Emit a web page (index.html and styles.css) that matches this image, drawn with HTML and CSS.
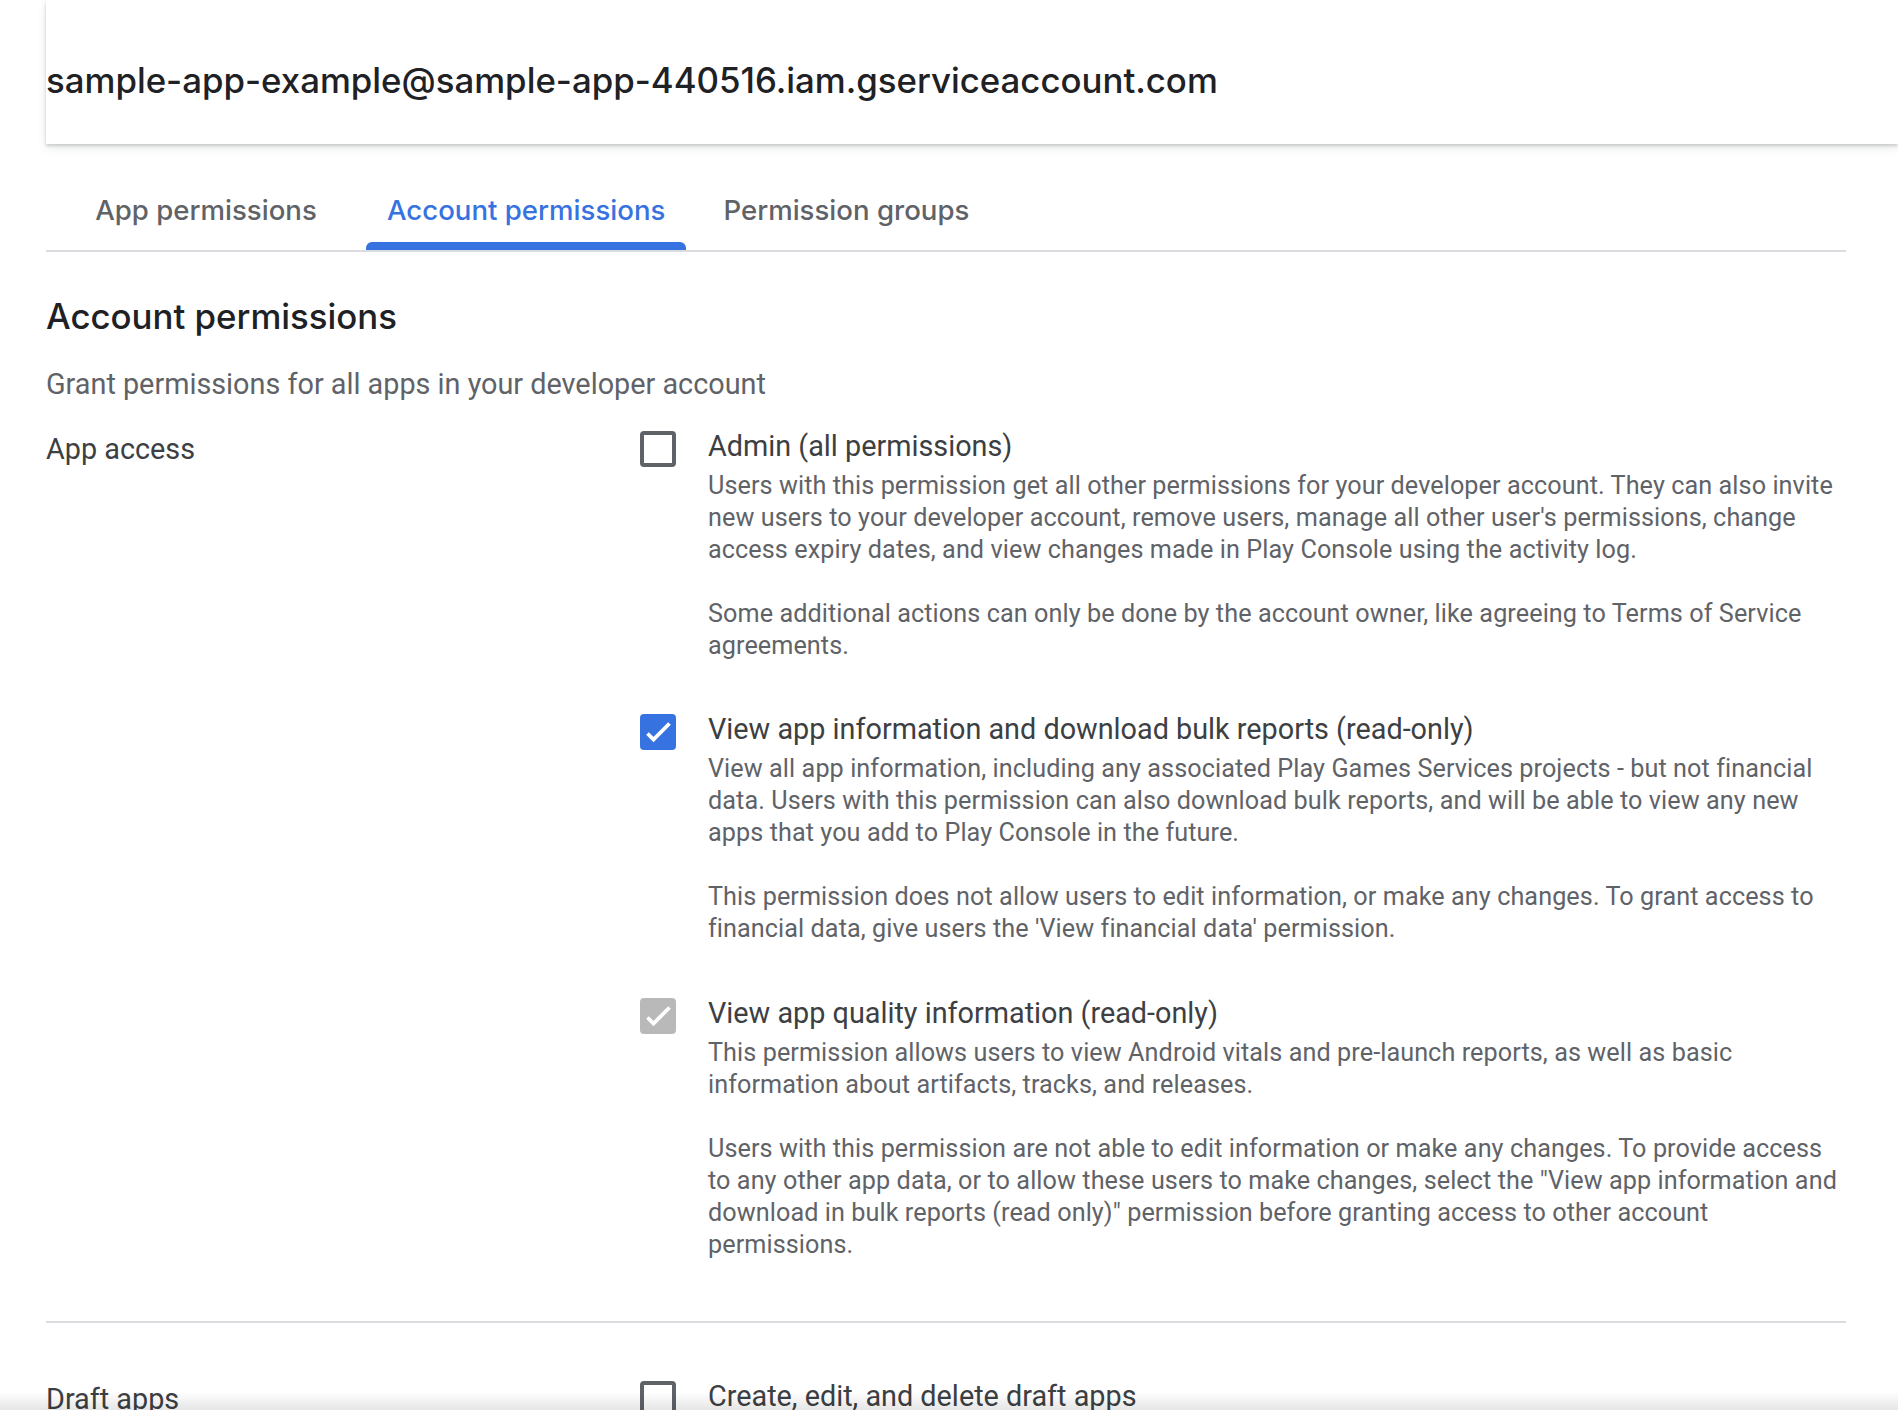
FILE: index.html
```html
<!DOCTYPE html>
<html lang="en">
<head>
<meta charset="utf-8">
<title>Account permissions</title>
<link rel="stylesheet" href="styles.css">
</head>
<body>
<header class="topbar">
  <h1 class="account-email">sample-app-example@sample-app-440516.iam.gserviceaccount.com</h1>
</header>

<main class="content">
  <nav class="tabs">
    <div class="tab">App permissions</div>
    <div class="tab tab-active">Account permissions</div>
    <div class="tab">Permission groups</div>
  </nav>

  <h2 class="section-title">Account permissions</h2>
  <p class="section-sub">Grant permissions for all apps in your developer account</p>

  <section class="perm-group">
    <div class="group-label">App access</div>
    <div class="options">
      <div class="option">
        <span class="checkbox"></span>
        <div class="option-body">
          <div class="option-label">Admin (all permissions)</div>
          <div class="option-desc">
            <p>Users with this permission get all other permissions for your developer account. They can also invite new users to your developer account, remove users, manage all other user's permissions, change access expiry dates, and view changes made in Play Console using the activity log.</p>
            <p>Some additional actions can only be done by the account owner, like agreeing to Terms of Service agreements.</p>
          </div>
        </div>
      </div>

      <div class="option">
        <span class="checkbox checkbox-checked">
          <svg viewBox="0 0 36 36" class="check-icon"><polyline points="7.5,19.5 13.5,25.5 29.5,9.5"/></svg>
        </span>
        <div class="option-body">
          <div class="option-label">View app information and download bulk reports (read-only)</div>
          <div class="option-desc">
            <p>View all app information, including any associated Play Games Services projects - but not financial data. Users with this permission can also download bulk reports, and will be able to view any new apps that you add to Play Console in the future.</p>
            <p>This permission does not allow users to edit information, or make any changes. To grant access to financial data, give users the 'View financial data' permission.</p>
          </div>
        </div>
      </div>

      <div class="option">
        <span class="checkbox checkbox-disabled">
          <svg viewBox="0 0 36 36" class="check-icon"><polyline points="7.5,19.5 13.5,25.5 29.5,9.5"/></svg>
        </span>
        <div class="option-body">
          <div class="option-label">View app quality information (read-only)</div>
          <div class="option-desc">
            <p>This permission allows users to view Android vitals and pre-launch reports, as well as basic information about artifacts, tracks, and releases.</p>
            <p>Users with this permission are not able to edit information or make any changes. To provide access to any other app data, or to allow these users to make changes, select the "View app information and download in bulk reports (read only)" permission before granting access to other account permissions.</p>
          </div>
        </div>
      </div>
    </div>
  </section>

  <hr class="divider">

  <section class="perm-group perm-group-next">
    <div class="group-label">Draft apps</div>
    <div class="options">
      <div class="option">
        <span class="checkbox"></span>
        <div class="option-body">
          <div class="option-label">Create, edit, and delete draft apps</div>
        </div>
      </div>
    </div>
  </section>
</main>

<div class="bottom-shade"></div>
</body>
</html>
```

FILE: styles.css
```css
* { box-sizing: border-box; }

html, body {
  margin: 0;
  padding: 0;
  background: #ffffff;
}

body {
  font-family: Roboto, "Liberation Sans", sans-serif;
  color: #3c4043;
}

.topbar {
  margin-left: 46px;
  height: 144px;
  padding-top: 16px;
  display: flex;
  align-items: center;
  background: #ffffff;
  box-shadow: 0 2px 3px rgba(60, 64, 67, 0.22), 0 4px 10px rgba(60, 64, 67, 0.10);
  position: relative;
  z-index: 1;
}

.account-email {
  margin: 0;
  font-family: Inter, "Open Sans", sans-serif;
  font-weight: 500;
  font-size: 34.8px;
  line-height: 40px;
  color: #202124;
}

.content {
  padding: 0 52px 0 46px;
}

.tabs {
  display: flex;
  margin-top: 28px;
  border-bottom: 2px solid #dadce0;
}

.tab {
  position: relative;
  min-width: 320px;
  height: 78px;
  padding: 0 21px 2px;
  display: flex;
  align-items: center;
  justify-content: center;
  font-family: Inter, "Open Sans", sans-serif;
  font-weight: 500;
  font-size: 27.6px;
  color: #5f6368;
}

.tab-active {
  color: #3672e0;
}

.tab-active::after {
  content: "";
  position: absolute;
  left: 0;
  right: 0;
  bottom: 0;
  height: 8px;
  background: #3672e0;
  border-radius: 6px 6px 0 0;
}

.section-title {
  margin: 44px 0 0;
  font-family: Inter, "Open Sans", sans-serif;
  font-weight: 500;
  font-size: 34.8px;
  line-height: 40px;
  color: #202124;
}

.section-sub {
  margin: 32px 0 0;
  font-size: 28.8px;
  line-height: 32px;
  color: #5f6368;
}

.perm-group {
  display: grid;
  grid-template-columns: 594px 1fr;
  margin-top: 25.5px;
  padding-bottom: 60px;
}

.perm-group-next {
  margin-top: 0;
  padding-top: 53px;
}

.group-label {
  padding-top: 3.5px;
  font-size: 28.8px;
  line-height: 40px;
  color: #3c4043;
}

.options {
  display: flex;
  flex-direction: column;
  gap: 47.5px;
}

.option {
  display: flex;
  gap: 32px;
}

.checkbox {
  flex: none;
  width: 36px;
  height: 36px;
  margin-top: 5px;
  border: 4px solid #5f6368;
  border-radius: 4px;
  display: flex;
  align-items: center;
  justify-content: center;
}

.checkbox-checked {
  border: none;
  background: #3672e0;
}

.checkbox-disabled {
  border: none;
  background: #b9b9b9;
}

.check-icon {
  width: 36px;
  height: 36px;
  fill: none;
  stroke: #ffffff;
  stroke-width: 3.8;
}

.option-body {
  width: 1132px;
}

.option-label {
  font-size: 28.8px;
  line-height: 40px;
  color: #3c4043;
}

.option-desc {
  margin-top: 4px;
  font-size: 25.2px;
  letter-spacing: 0.08px;
  line-height: 32px;
  color: #5f6368;
}

.option-desc p {
  margin: 0;
}

.option-desc p + p {
  margin-top: 32px;
}

.divider {
  margin: 0;
  border: none;
  height: 2px;
  background: #dadce0;
}

.bottom-shade {
  position: fixed;
  left: 0;
  right: 0;
  bottom: 0;
  height: 18px;
  background: linear-gradient(to bottom, rgba(0, 0, 0, 0), rgba(0, 0, 0, 0.10));
  pointer-events: none;
}
```
